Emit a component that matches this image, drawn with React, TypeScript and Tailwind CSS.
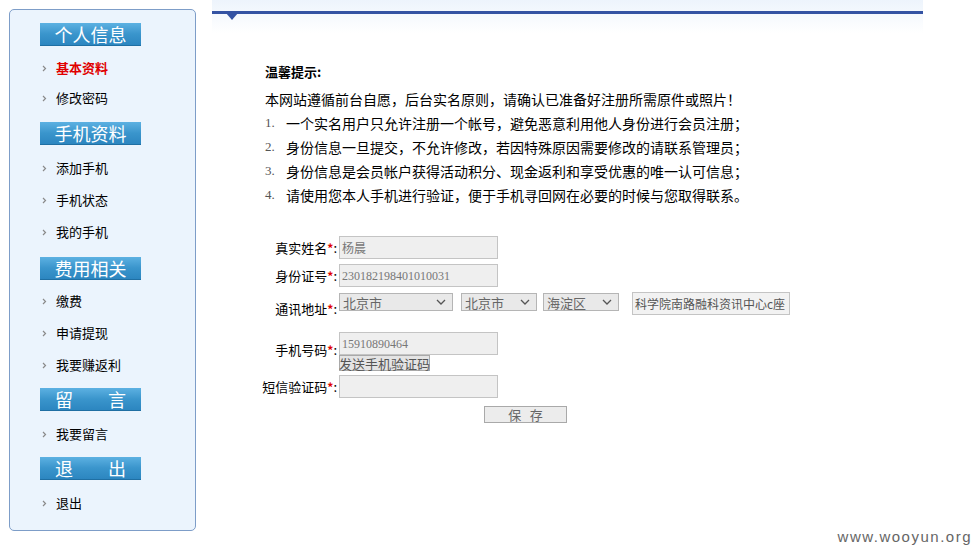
import React from 'react';

const cjk = "font-['SimSun','Noto_Sans_CJK_SC',sans-serif]";

const Arrow = () => (
  <svg width="5" height="7" viewBox="0 0 5 7" className="shrink-0">
    <polyline points="1,1 3.5,3.5 1,6" fill="none" stroke="#8a8a8a" strokeWidth="1.2" />
  </svg>
);

const Header: React.FC<{ title: React.ReactNode }> = ({ title }) => (
  <div className="w-[101px] h-[23px] bg-gradient-to-b from-[#5cb1e2] via-[#3a95cc] to-[#2c86c0] border-b border-[#1f6fa3] flex items-center justify-center text-white text-[18px] leading-none">
    {title}
  </div>
);

const Item: React.FC<{ label: string; active?: boolean; h: string }> = ({ label, active, h }) => (
  <div className={`flex items-center ${h}`}>
    <div className="w-[16px] pl-[2px]">
      <Arrow />
    </div>
    <span className={active ? 'text-[13px] font-bold text-[#e00000]' : 'text-[13px] text-black'}>{label}</span>
  </div>
);

const Req: React.FC<{ text: string }> = ({ text }) => (
  <span className="whitespace-nowrap">
    {text}
    <span className="text-[#e00000] font-bold text-[12px]">*</span>:
  </span>
);

const Select: React.FC<{ value: string; w: string }> = ({ value, w }) => (
  <div className={`${w} h-[18px] bg-[#e9e9e9] border border-[#b5b5b5] flex items-center justify-between pl-[3px] pr-[6px] text-[13px] text-[#666] leading-none`}>
    <span>{value}</span>
    <svg width="10" height="6" viewBox="0 0 10 6">
      <polyline points="1,1 5,5 9,1" fill="none" stroke="#555" strokeWidth="1.3" />
    </svg>
  </div>
);

const Input: React.FC<{ value?: string; serif?: boolean }> = ({ value, serif }) => (
  <div className={`w-[159px] h-[23px] bg-[#efefef] border border-[#c4c4c4] flex items-center pl-[2px] text-[12px] text-[#777] ${serif ? "font-['Liberation_Serif','Noto_Sans_CJK_SC',serif]" : ''}`}>
    {value}
  </div>
);

export default function App() {
  return (
    <div className={`relative w-[975px] h-[550px] bg-white flex ${cjk}`}>
      {/* Sidebar */}
      <div className="ml-[9px] mt-[9px] w-[187px] h-[522px] border border-[#7d9dc8] rounded-[5px] bg-[#ebf4fd] pt-[13px] pl-[30px]">
        <Header title="个人信息" />
        <div className="mt-[7px] mb-[9px]">
          <Item label="基本资料" active h="h-[30px]" />
          <Item label="修改密码" h="h-[30px]" />
        </div>
        <Header title="手机资料" />
        <div className="mt-[7px] mb-[9px]">
          <Item label="添加手机" h="h-[32px]" />
          <Item label="手机状态" h="h-[32px]" />
          <Item label="我的手机" h="h-[32px]" />
        </div>
        <Header title="费用相关" />
        <div className="mt-[5px] mb-[7px]">
          <Item label="缴费" h="h-[32px]" />
          <Item label="申请提现" h="h-[32px]" />
          <Item label="我要赚返利" h="h-[32px]" />
        </div>
        <Header title={<span className="flex w-full justify-between px-[15px]"><span>留</span><span>言</span></span>} />
        <div className="mt-[7px] mb-[7px]">
          <Item label="我要留言" h="h-[32px]" />
        </div>
        <Header title={<span className="flex w-full justify-between px-[15px]"><span>退</span><span>出</span></span>} />
        <div className="mt-[7px]">
          <Item label="退出" h="h-[32px]" />
        </div>
      </div>

      {/* Main */}
      <div className="flex-1">
        <div className="ml-[16px] w-[711px] h-[33px] pt-[11px] bg-gradient-to-b from-[#edf4fc] to-white">
          <div className="relative h-[3px] bg-[#3453a3]">
            <svg width="12" height="7" viewBox="0 0 12 7" className="absolute left-[14px] top-[2px]">
              <polygon points="0,0 12,0 6,7" fill="#3453a3" />
            </svg>
          </div>
        </div>

        <div className="pl-[54px]">
          <div className="pl-[15px]">
            <div className="mt-[31px] text-[13px] font-bold leading-[16px] text-black">温馨提示:</div>
            <div className="mt-[7px] text-[14px] leading-[24px] text-black">
              <div>本网站遵循前台自愿，后台实名原则，请确认已准备好注册所需原件或照片！</div>
              {[
                '一个实名用户只允许注册一个帐号，避免恶意利用他人身份进行会员注册；',
                '身份信息一旦提交，不允许修改，若因特殊原因需要修改的请联系管理员；',
                '身份信息是会员帐户获得活动积分、现金返利和享受优惠的唯一认可信息；',
                '请使用您本人手机进行验证，便于手机寻回网在必要的时候与您取得联系。',
              ].map((t, i) => (
                <div key={i} className="flex">
                  <span className="w-[21px] text-[13px] text-[#555] font-['Liberation_Serif',serif]">{i + 1}.</span>
                  <span>{t}</span>
                </div>
              ))}
            </div>
          </div>

          {/* Form */}
          <div className="mt-[29px] text-[13px] text-black">
            <div className="flex items-center">
              <div className="w-[87px] text-right"><Req text="真实姓名" /></div>
              <div className="ml-[2px]"><Input value="杨晨" /></div>
            </div>
            <div className="flex items-center mt-[5px]">
              <div className="w-[87px] text-right"><Req text="身份证号" /></div>
              <div className="ml-[2px]"><Input value="230182198401010031" serif /></div>
            </div>
            <div className="flex items-start mt-[5px] h-[23px]">
              <div className="w-[87px] text-right pt-[9px] leading-[16px]"><Req text="通讯地址" /></div>
              <div className="ml-[2px] mt-[1px] flex gap-[8px]">
                <Select value="北京市" w="w-[114px]" />
                <Select value="北京市" w="w-[76px]" />
              </div>
              <div className="ml-[6px] mt-[1px]">
                <Select value="海淀区" w="w-[76px]" />
              </div>
              <div className="ml-[13px] w-[158px] h-[23px] bg-[#f2f2f2] border border-[#c4c4c4] flex items-center pl-[2px] text-[12px] text-[#555] whitespace-nowrap overflow-hidden">
                科学院南路融科资讯中心c座
              </div>
            </div>
            <div className="flex items-start mt-[17px]">
              <div className="w-[87px] text-right pt-[10px] leading-[16px]"><Req text="手机号码" /></div>
              <div className="ml-[2px]">
                <Input value="15910890464" serif />
                <div className="w-[91px] h-[16px] bg-[#e4e4e4] border border-[#a9a9a9] flex items-center justify-center text-[13px] text-[#555] leading-none whitespace-nowrap">
                  发送手机验证码
                </div>
              </div>
            </div>
            <div className="flex items-center mt-[4px]">
              <div className="w-[87px] text-right"><Req text="短信验证码" /></div>
              <div className="ml-[2px]"><Input /></div>
            </div>
            <div className="mt-[8px] ml-[234px] w-[83px] h-[17px] bg-[#ececec] border border-[#a9a9a9] flex items-center justify-center text-[13px] text-[#666] leading-none">
              保&nbsp;&nbsp;&nbsp;存
            </div>
          </div>
        </div>
      </div>

      <div className="absolute right-[3px] bottom-[2px] text-[15px] tracking-[1.5px] text-[#666] font-['Liberation_Sans',sans-serif]">
        www.wooyun.org
      </div>
    </div>
  );
}
